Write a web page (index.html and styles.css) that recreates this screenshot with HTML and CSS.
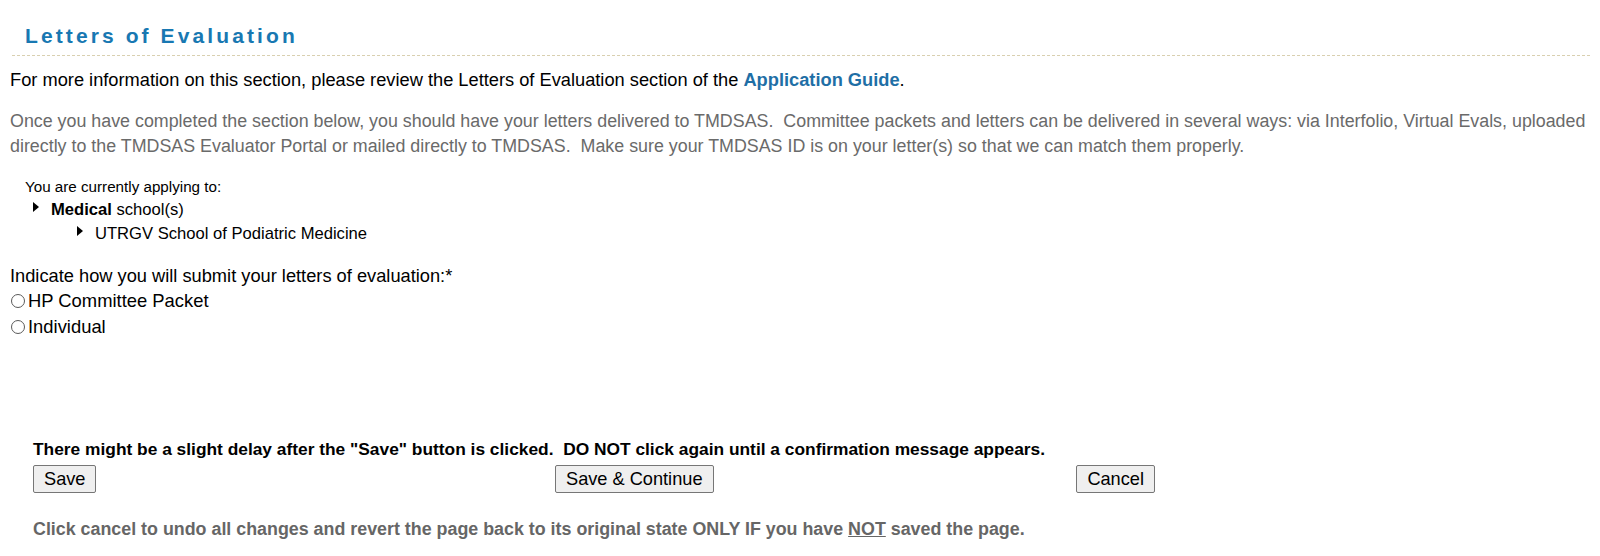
FILE: index.html
```html
<!DOCTYPE html>
<html>
<head>
<meta charset="utf-8">
<link rel="stylesheet" href="styles.css">
</head>
<body>
<div class="page">
  <div class="section-head">
    <h2 class="title">Letters of Evaluation</h2>
  </div>
  <p class="info">For more information on this section, please review the Letters of Evaluation section of the <a class="guide" href="#">Application Guide</a>.</p>
  <p class="note">Once you have completed the section below, you should have your letters delivered to TMDSAS.&nbsp; Committee packets and letters can be delivered in several ways: via Interfolio, Virtual Evals, uploaded directly to the TMDSAS Evaluator Portal or mailed directly to TMDSAS.&nbsp; Make sure your TMDSAS ID is on your letter(s) so that we can match them properly.</p>
  <div class="applying">
    <div class="applying-label">You are currently applying to:</div>
    <div class="tree-row lvl1"><span class="tri"></span><span><b>Medical</b> school(s)</span></div>
    <div class="tree-row lvl2"><span class="tri"></span><span>UTRGV School of Podiatric Medicine</span></div>
  </div>
  <div class="question">
    <div class="q-label">Indicate how you will submit your letters of evaluation:*</div>
    <label class="opt"><input type="radio" name="sub"><span>HP Committee Packet</span></label>
    <label class="opt"><input type="radio" name="sub"><span>Individual</span></label>
  </div>
  <div class="actions">
    <div class="warn">There might be a slight delay after the "Save" button is clicked.&nbsp; DO NOT click again until a confirmation message appears.</div>
    <div class="btn-row">
      <div class="cell left"><button class="btn">Save</button></div>
      <div class="cell mid"><button class="btn">Save &amp; Continue</button></div>
      <div class="cell right"><button class="btn">Cancel</button></div>
    </div>
    <div class="cancel-note">Click cancel to undo all changes and revert the page back to its original state ONLY IF you have <u>NOT</u> saved the page.</div>
  </div>
</div>
</body>
</html>
```

FILE: styles.css
```css
html, body {
  margin: 0;
  padding: 0;
  background: #ffffff;
}
body {
  font-family: "Liberation Sans", Arial, sans-serif;
  color: #000;
  font-size: 16px;
}
.page {
  padding: 22px 10px 0 10px;
}
.section-head {
  margin-left: 2px;
  border-bottom: 1px dashed #d9d0b0;
  padding: 0 0 5px 13px;
}
.title {
  margin: 0;
  font-size: 21px;
  font-weight: bold;
  letter-spacing: 3.1px;
  color: #1878b2;
  line-height: 28px;
}
.info {
  margin: 12px 0 0 0;
  font-size: 18.25px;
  line-height: 24px;
}
.guide {
  color: #1f6fa6;
  font-weight: bold;
  text-decoration: none;
}
.note {
  margin: 17px 0 0 0;
  font-size: 17.85px;
  line-height: 25px;
  color: #6a6a6a;
}
.applying {
  margin: 16px 0 0 15px;
  font-size: 15.2px;
}
.applying-label {
  line-height: 23px;
}
.tree-row {
  display: flex;
  align-items: center;
  gap: 12px;
  font-size: 16.6px;
  line-height: 24px;
}
.lvl1 { padding-left: 8px; }
.lvl2 { padding-left: 52px; }
.tri {
  width: 0;
  height: 0;
  border-top: 5px solid transparent;
  border-bottom: 5px solid transparent;
  border-left: 6px solid #000;
  margin-top: -6px;
}
.question {
  margin-top: 18px;
  font-size: 18.25px;
}
.q-label {
  line-height: 24px;
}
.opt {
  display: flex;
  align-items: center;
  height: 26px;
  font-size: 18.4px;
}
.opt input {
  appearance: none;
  -webkit-appearance: none;
  box-sizing: border-box;
  margin: 0 3px 0 1px;
  width: 14px;
  height: 14px;
  border: 1px solid #5a5a5a;
  border-radius: 50%;
  background: #fff;
}
.actions {
  margin: 98px 0 0 23px;
  width: 1122px;
}
.warn {
  font-weight: bold;
  font-size: 17.35px;
  line-height: 22px;
}
.btn-row {
  display: grid;
  grid-template-columns: 522px auto 1fr;
  margin-top: 5px;
}
.cell.right { text-align: right; }
.btn {
  font-family: "Liberation Sans", Arial, sans-serif;
  font-size: 18.2px;
  height: 28px;
  padding: 0 10px;
  background: #efefef;
  border: 1px solid #767676;
  border-radius: 2px;
  color: #000;
}
.cancel-note {
  margin-top: 25px;
  font-weight: bold;
  font-size: 17.85px;
  color: #666;
  line-height: 22px;
}
```
